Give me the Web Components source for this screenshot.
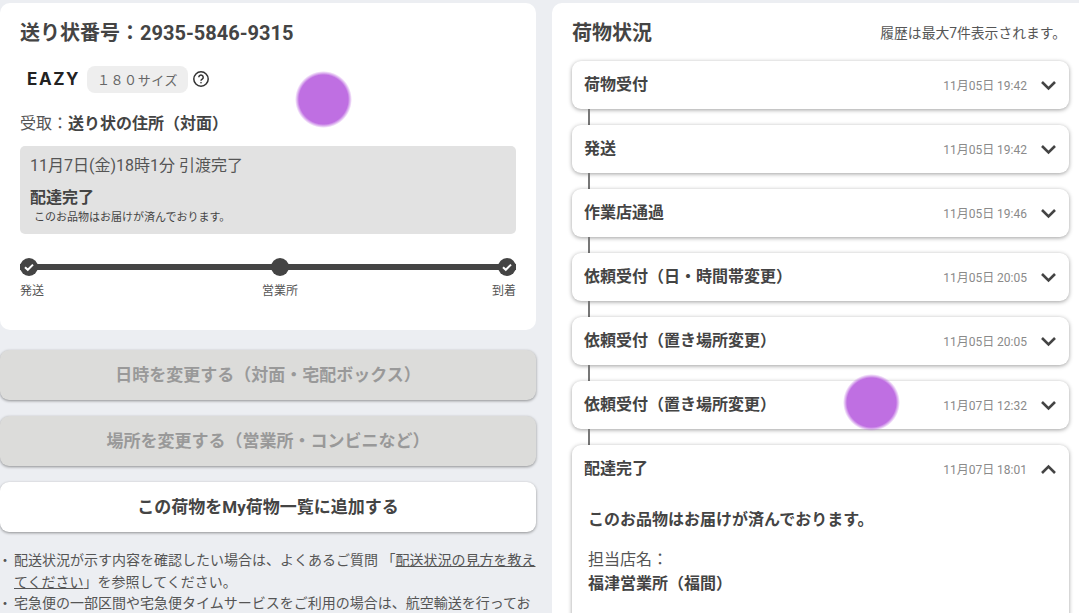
<!DOCTYPE html>
<html lang="ja">
<head>
<meta charset="utf-8">
<style>
  html, body { margin: 0; height: 613px; overflow: hidden; }
  body {
    background: #eceef2;
    color: #444;
    font-family: Roboto, "Noto Sans CJK JP", sans-serif;
    position: relative;
  }
  .page {
    display: grid;
    grid-template-columns: 536px 1fr;
    column-gap: 16px;
    padding-top: 3px;
  }
  .left { display: flex; flex-direction: column; }
</style>
</head>
<body>
<div class="page">
  <div class="left">
    <parcel-summary></parcel-summary>
    <action-button disabled style="margin-top:20px">日時を変更する（対面・宅配ボックス）</action-button>
    <action-button disabled style="margin-top:16px">場所を変更する（営業所・コンビニなど）</action-button>
    <action-button style="margin-top:16px">この荷物をMy荷物一覧に追加する</action-button>
    <note-list></note-list>
  </div>
  <status-panel></status-panel>
</div>
<touch-dot style="left:295px;top:71px"></touch-dot>
<touch-dot style="left:843px;top:374px"></touch-dot>

<script>
class ParcelSummary extends HTMLElement {
  constructor() {
    super();
    this.attachShadow({ mode: "open" });
  }
  connectedCallback() {
    this.shadowRoot.innerHTML = `
<style>
  :host { display: block; background: #fff; border-radius: 10px; padding: 18px 20px 0; height: 309px; }
  h1 { margin: 0; font-size: 20px; line-height: 24px; font-weight: 700; color: #444; }
  .size-row { display: flex; align-items: center; margin-top: 20px; height: 28px; padding-left: 7px; }
  .logo { font: 700 17px/20px Inter, sans-serif; letter-spacing: 1.6px; color: #222; width: 60px; }
  .size { background: #eeeeee; border-radius: 8px; height: 27px; width: 101px; display: flex; align-items: center; justify-content: center; font-size: 13px; color: #666; letter-spacing: .6px; }
  .help { margin-left: 4px; display: block; }
  .receive { margin-top: 19px; font-size: 16px; line-height: 24px; color: #555; }
  .receive b { color: #444; }
  .status { margin-top: 10px; background: #e2e2e2; border-radius: 5px; height: 88px; width: 496px; padding: 8px 10px; box-sizing: border-box; }
  .when { font-size: 16px; line-height: 23px; color: #555; }
  .title { margin-top: 10px; font-size: 16px; line-height: 21px; font-weight: 700; }
  .sub { margin-top: 3px; font-size: 11px; line-height: 14px; padding-left: 4px; color: #444; }
  progress-track { margin-top: 24px; }
</style>
<h1>送り状番号：2935-5846-9315</h1>
<div class="size-row">
  <span class="logo">EAZY</span>
  <span class="size">１８０サイズ</span>
  <svg class="help" width="18" height="18" viewBox="0 0 18 18" fill="none" stroke="#333" stroke-width="1.5">
    <circle cx="9" cy="9" r="7.2"/>
    <path d="M6.8 7.2a2.2 2.2 0 1 1 3.4 1.9c-.8.5-1.2.9-1.2 1.7"/>
    <circle cx="9" cy="12.7" r=".5" fill="#333" stroke-width=".6"/>
  </svg>
</div>
<div class="receive">受取：<b>送り状の住所（対面）</b></div>
<div class="status">
  <div class="when">11月7日(金)18時1分 引渡完了</div>
  <div class="title">配達完了</div>
  <div class="sub">このお品物はお届けが済んでおります。</div>
</div>
<progress-track></progress-track>`;
  }
}

class ProgressTrack extends HTMLElement {
  constructor() {
    super();
    this.attachShadow({ mode: "open" });
  }
  connectedCallback() {
    const check = `<svg width="18" height="18" viewBox="0 0 18 18"><circle cx="9" cy="9" r="9" fill="#444"/><path d="M5 9.2l2.8 2.6L13 6.6" fill="none" stroke="#fff" stroke-width="2"/></svg>`;
    const plain = `<svg class="mid" width="18" height="18" viewBox="0 0 18 18"><circle cx="9" cy="9" r="9" fill="#444"/></svg>`;
    this.shadowRoot.innerHTML = `
<style>
  :host { display: block; width: 496px; }
  .bar { display: flex; justify-content: space-between; align-items: center; height: 18px;
    background: linear-gradient(#444,#444) center / 100% 6px no-repeat; }
  svg { display: block; }
  .mid, .labels .mid { margin-left: 24px; }
  .labels { display: flex; justify-content: space-between; margin-top: 7px; font-size: 12px; line-height: 16px; color: #555; }
</style>
<div class="bar">${check}${plain}${check}</div>
<div class="labels"><span>発送</span><span class="mid">営業所</span><span>到着</span></div>`;
  }
}

class ActionButton extends HTMLElement {
  constructor() {
    super();
    this.attachShadow({ mode: "open" });
  }
  connectedCallback() {
    this.shadowRoot.innerHTML = `
<style>
  :host { display: flex; align-items: center; justify-content: center; height: 50px; border-radius: 9px;
    background: #fff; color: #444; font-size: 17px; font-weight: 700; box-shadow: 0 1px 3px rgba(0,0,0,.4); }
  :host([disabled]) { background: #dcdcda; color: #999; }
  span { position: relative; top: -2px; }
</style>
<span><slot></slot></span>`;
  }
}

class NoteList extends HTMLElement {
  constructor() {
    super();
    this.attachShadow({ mode: "open" });
  }
  connectedCallback() {
    this.shadowRoot.innerHTML = `
<style>
  :host { display: block; margin-top: 18px; font-size: 14px; line-height: 21.5px; color: #555; }
  ul { list-style: none; margin: 0; padding: 0; }
  li { position: relative; padding-left: 14px; }
  li::before { content: "・"; position: absolute; left: -2px; }
  a { color: inherit; text-decoration: underline; }
</style>
<ul>
  <li>配送状況が示す内容を確認したい場合は、よくあるご質問 「<a href="#">配送状況の見方を教えてください</a>」を参照してください。</li>
  <li>宅急便の一部区間や宅急便タイムサービスをご利用の場合は、航空輸送を行っております。</li>
</ul>`;
  }
}

class StatusPanel extends HTMLElement {
  constructor() {
    super();
    this.attachShadow({ mode: "open" });
  }
  connectedCallback() {
    this.shadowRoot.innerHTML = `
<style>
  :host { display: block; background: #fff; border-radius: 10px 0 0 0; height: 620px; padding: 0 10px 0 20px; }
  header { display: flex; justify-content: space-between; align-items: center; padding-top: 16px; height: 25px; }
  h2 { margin: 0; font-size: 20px; font-weight: 700; color: #444; }
  .hint { font-size: 13.8px; color: #555; margin-right: 3px; }
  .list { margin-top: 17px; }
</style>
<header><h2>荷物状況</h2><span class="hint">履歴は最大7件表示されます。</span></header>
<div class="list">
  <status-row time="11月05日 19:42">荷物受付</status-row>
  <status-row time="11月05日 19:42">発送</status-row>
  <status-row time="11月05日 19:46">作業店通過</status-row>
  <status-row time="11月05日 20:05">依頼受付（日・時間帯変更）</status-row>
  <status-row time="11月05日 20:05">依頼受付（置き場所変更）</status-row>
  <status-row time="11月07日 12:32">依頼受付（置き場所変更）</status-row>
  <status-row time="11月07日 18:01" open last>配達完了
    <div slot="detail">
      <p style="margin:0;font-size:16px;line-height:24px;font-weight:700;color:#444">このお品物はお届けが済んでおります。</p>
      <p style="margin:16px 0 0;font-size:16px;line-height:24px;color:#555">担当店名：<br><b style="color:#444">福津営業所（福間）</b></p>
    </div>
  </status-row>
</div>`;
  }
}

class StatusRow extends HTMLElement {
  constructor() {
    super();
    this.attachShadow({ mode: "open" });
  }
  connectedCallback() {
    const open = this.hasAttribute("open");
    const chevron = open ? "M2 11l6.5-6.5L15 11" : "M2 4l6.5 6.5L15 4";
    this.shadowRoot.innerHTML = `
<style>
  :host { display: block; position: relative; margin-bottom: 16px; background: #fff; border-radius: 9px;
    box-shadow: 0 1px 4px rgba(0,0,0,.38); }
  :host(:not([last]))::after { content: ""; position: absolute; left: 16px; top: 100%; width: 1.5px; height: 16px; background: #777; }
  .head { display: flex; align-items: center; height: 48px; padding: 0 12px; }
  .name { flex: 1; font-size: 16px; line-height: 22px; font-weight: 700; color: #444; }
  .time { font-size: 12px; color: #8a8a8a; margin-right: 13px; position: relative; top: -1px; }
  svg { display: block; }
  .detail { padding: 15px 16px 30px; }
</style>
<div class="head">
  <span class="name"><slot></slot></span>
  <span class="time">${this.getAttribute("time")}</span>
  <svg width="17" height="15" viewBox="0 0 17 15" fill="none" stroke="#444" stroke-width="2.6"><path d="${chevron}"/></svg>
</div>
${open ? '<div class="detail"><slot name="detail"></slot></div>' : ""}`;
  }
}

class TouchDot extends HTMLElement {
  constructor() {
    super();
    this.attachShadow({ mode: "open" });
  }
  connectedCallback() {
    this.shadowRoot.innerHTML = `
<style>
  :host { display: block; position: absolute; width: 57px; height: 57px; border-radius: 50%;
    background: radial-gradient(circle closest-side, #bf6fe2 0 86%, rgba(191,111,226,0) 100%); }
</style>`;
  }
}

customElements.define("progress-track", ProgressTrack);
customElements.define("parcel-summary", ParcelSummary);
customElements.define("action-button", ActionButton);
customElements.define("note-list", NoteList);
customElements.define("status-row", StatusRow);
customElements.define("status-panel", StatusPanel);
customElements.define("touch-dot", TouchDot);
</script>
</body>
</html>
